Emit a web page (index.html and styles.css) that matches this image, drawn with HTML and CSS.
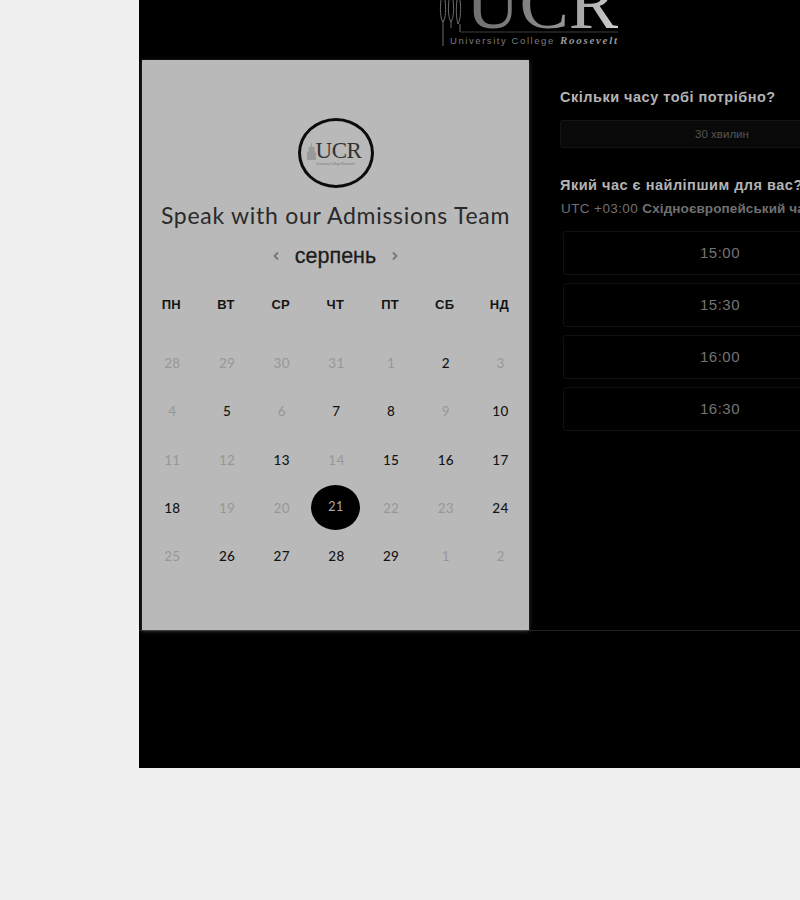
FILE: index.html
```html
<!DOCTYPE html>
<html lang="uk">
<head>
    <meta charset="UTF-8">
    <meta name="viewport" content="width=device-width, initial-scale=1.0">
    <title>Speak with our Admissions Team</title>
    <link rel="stylesheet" href="styles.css">
</head>
<body>
    <div class="page">
        <header class="top">
            <svg class="top-logo" width="182" height="50" viewBox="0 0 182 50">
                <defs>
                    <linearGradient id="ucrFill" x1="0" x2="1" y1="0" y2="0">
                        <stop offset="0" stop-color="#6e6e6e"/>
                        <stop offset="0.55" stop-color="#8a8a8a"/>
                        <stop offset="1" stop-color="#d0d0d0"/>
                    </linearGradient>
                </defs>
                <g fill="none" stroke="#6c6c6c" stroke-width="1">
                    <path d="M5 46V20"/>
                    <path d="M5 22C2 18 2 8 3 0M5 22C8 18 8 8 7 0"/>
                    <path d="M13 22C10 17 10 8 11 0M13 22C16 17 16 8 15 0"/>
                    <path d="M20 24C18 18 18 8 19 0M20 24C23 18 23 8 22 0M22 24V32"/>
                    <path d="M13 22V28"/>
                </g>
                <path d="M22 32H180" stroke="#3c3c3c" stroke-width="1"/>
                <text class="logo-big" x="28" y="28" fill="url(#ucrFill)">UCR</text>
                <text class="logo-small" x="12" y="44" fill="#7c7c7c">University College</text>
                <text class="logo-script" x="122" y="44" fill="#989898">Roosevelt</text>
            </svg>
        </header>

        <main class="booking">
            <section class="card">
                <div class="badge">
                    <div class="badge-mark">
                        <svg class="badge-tower" width="9" height="18" viewBox="0 0 9 18"><path d="M4.5 0L5.5 5H7.5V9L9 11V18H0V11L1.500 9V5H3.500Z"/></svg>
                        <span class="badge-text">UCR</span>
                    </div>
                    <span class="badge-sub">University College Roosevelt</span>
                </div>
                <h1 class="card-title">Speak with our Admissions Team</h1>
                <div class="month">
                    <svg class="chev" width="8" height="12" viewBox="0 0 8 12"><path d="M6 2.500L2.500 6L6 9.500"/></svg>
                    <span class="month-name">серпень</span>
                    <svg class="chev" width="8" height="12" viewBox="0 0 8 12"><path d="M2 2.500L5.500 6L2 9.500"/></svg>
                </div>
                <div class="weekdays">
                    <span>ПН</span><span>ВТ</span><span>СР</span><span>ЧТ</span><span>ПТ</span><span>СБ</span><span>НД</span>
                </div>
                <div class="days">
                    <span class="off">28</span><span class="off">29</span><span class="off">30</span><span class="off">31</span><span class="off">1</span><span>2</span><span class="off">3</span>
                    <span class="off">4</span><span>5</span><span class="off">6</span><span>7</span><span>8</span><span class="off">9</span><span>10</span>
                    <span class="off">11</span><span class="off">12</span><span>13</span><span class="off">14</span><span>15</span><span>16</span><span>17</span>
                    <span>18</span><span class="off">19</span><span class="off">20</span><span class="selected">21</span><span class="off">22</span><span class="off">23</span><span>24</span>
                    <span class="off">25</span><span>26</span><span>27</span><span>28</span><span>29</span><span class="off">1</span><span class="off">2</span>
                </div>
            </section>

            <section class="side">
                <h2 class="side-title">Скільки часу тобі потрібно?</h2>
                <div class="duration">30 хвилин</div>
                <h2 class="side-title side-title-time">Який час є найліпшим для вас?</h2>
                <p class="zone">UTC +03:00 <b>Східноєвропейський час</b></p>
                <div class="slots">
                    <div class="slot">15:00</div>
                    <div class="slot">15:30</div>
                    <div class="slot">16:00</div>
                    <div class="slot">16:30</div>
                </div>
            </section>
        </main>
    </div>
</body>
</html>
```

FILE: styles.css
```css
html, body {
    height: 100%;
}

body {
    margin: 0;
    background-color: #f0f0f0;
    font-family: 'Liberation Sans', Arial, sans-serif;
    overflow: hidden;
}

.page {
    margin-left: 139px;
    width: 778px;
    height: 768px;
    background-color: #000;
}

.top {
    height: 60px;
    display: flex;
    justify-content: center;
}

.top-logo {
    display: block;
    margin-left: 2px;
}

.logo-big {
    font-family: 'Liberation Serif', serif;
    font-size: 74px;
}

.logo-small {
    font-family: 'Liberation Sans', sans-serif;
    font-size: 9.5px;
    letter-spacing: 1.57px;
}

.logo-script {
    font-family: 'Liberation Serif', serif;
    font-size: 11px;
    font-style: italic;
    font-weight: bold;
    letter-spacing: 1.7px;
}

.booking {
    display: flex;
    height: 571px;
    padding-left: 3px;
    box-sizing: border-box;
    border-bottom: 1px solid #222;
}

.card {
    width: 387px;
    height: 570px;
    flex: none;
    background-color: #b9b9b9;
    box-shadow: 0 1px 4px rgba(255, 255, 255, 0.25);
    padding-top: 58px;
    box-sizing: border-box;
}

.badge {
    width: 70px;
    height: 64px;
    margin: 0 auto;
    border: 3px solid #0c0c0c;
    border-radius: 50%;
    display: flex;
    flex-direction: column;
    align-items: center;
    justify-content: center;
    color: #333;
}

.badge-mark {
    display: flex;
    align-items: flex-end;
    gap: 0;
    margin-left: -3px;
}

.badge-tower {
    display: block;
    fill: #9a9a9a;
    margin-bottom: 2px;
}

.badge-text {
    font-family: 'Liberation Serif', serif;
    font-size: 23px;
    line-height: 22px;
    letter-spacing: -0.5px;
}

.badge-sub {
    font-size: 3px;
    line-height: 4px;
    color: #777;
    white-space: nowrap;
}

.card-title {
    margin: 10px 0 0;
    font-family: Lato, sans-serif;
    font-size: 23px;
    line-height: 34px;
    font-weight: 400;
    color: #2a2a2a;
    text-align: center;
    letter-spacing: 0.72px;
}

.month {
    margin-top: 7px;
    height: 34px;
    display: flex;
    align-items: center;
    justify-content: center;
    gap: 15px;
}

.month-name {
    font-size: 21.5px;
    color: #1c1c1c;
    -webkit-text-stroke: 0.3px #1c1c1c;
}

.chev {
    fill: none;
    stroke: #777;
    stroke-width: 1.8;
}

.weekdays,
.days {
    display: grid;
    grid-template-columns: repeat(7, 54.7px);
    text-align: center;
}

.weekdays {
    margin-top: 17px;
    padding-left: 2px;
    font-size: 13px;
    line-height: 30px;
    font-weight: bold;
    color: #151515;
    letter-spacing: 0.3px;
}

.days {
    margin-top: 19px;
    padding-left: 3px;
    grid-auto-rows: 48.25px;
    font-family: Lato, sans-serif;
    font-size: 13.5px;
    font-weight: 500;
    color: #141414;
    letter-spacing: 0.3px;
}

.days span {
    display: flex;
    align-items: center;
    justify-content: center;
}

.days .off {
    color: #979797;
    font-weight: 400;
}

.days .selected {
    width: 49px;
    height: 45px;
    box-sizing: border-box;
    padding-bottom: 2px;
    margin-left: -1px;
    justify-self: center;
    align-self: center;
    border-radius: 50%;
    background-color: #000;
    color: #a8a8a8;
    font-size: 12.5px;
    font-weight: 400;
}

.side {
    flex: 1;
    min-width: 0;
    padding: 28px 33px 0 31px;
}

.side-title {
    margin: 0;
    font-size: 14.5px;
    line-height: 18px;
    font-weight: bold;
    color: #b4b4b4;
    letter-spacing: 0.5px;
    white-space: nowrap;
}

.side-title-time {
    margin-top: 28px;
}

.duration {
    margin-top: 14px;
    height: 28px;
    line-height: 26px;
    box-sizing: border-box;
    background-color: #090909;
    border: 1px solid #141414;
    border-radius: 3px;
    font-size: 11.5px;
    color: #555;
    text-align: center;
}

.zone {
    margin: 7px 0 0 1px;
    font-size: 13.5px;
    line-height: 16px;
    color: #707070;
    letter-spacing: 0.4px;
    white-space: nowrap;
}

.zone b {
    letter-spacing: 0.1px;
}

.slots {
    margin: 14px 7px 0 3px;
    display: flex;
    flex-direction: column;
    gap: 8.6px;
}

.slot {
    height: 43.5px;
    line-height: 42px;
    box-sizing: border-box;
    border: 1px solid #111;
    border-radius: 3px;
    font-size: 15px;
    color: #737373;
    text-align: center;
    letter-spacing: 0.5px;
}
```
